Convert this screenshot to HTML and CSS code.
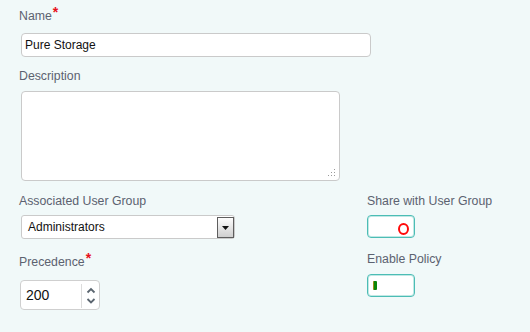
FILE: index.html
```html
<!DOCTYPE html>
<html lang="en">
<head>
  <meta charset="UTF-8" />
  <title>Policy</title>
  <link rel="stylesheet" href="styles.css">
</head>
<body>
  <div class="policy-form">
    <div class="field">
      <label class="field-label">Name<span class="req">*</span></label>
      <input class="text-input name-input" type="text" value="Pure Storage">
    </div>

    <div class="field desc-field">
      <label class="field-label">Description</label>
      <div class="desc-wrap">
        <textarea class="desc-input"></textarea>
        <svg class="grip" width="8" height="8" viewBox="0 0 8 8">
          <rect x="6" y="0" width="1" height="1" fill="#9a9a9a"/>
          <rect x="3" y="3" width="1" height="1" fill="#9a9a9a"/>
          <rect x="6" y="3" width="1" height="1" fill="#9a9a9a"/>
          <rect x="0" y="6" width="1" height="1" fill="#9a9a9a"/>
          <rect x="3" y="6" width="1" height="1" fill="#9a9a9a"/>
          <rect x="6" y="6" width="1" height="1" fill="#9a9a9a"/>
        </svg>
      </div>
    </div>

    <div class="form-row">
      <div class="col-left">
        <div class="field">
          <label class="field-label">Associated User Group</label>
          <div class="select-box">
            <span class="select-value">Administrators</span>
            <span class="select-btn">
              <svg width="7" height="4" viewBox="0 0 7 4"><path d="M0 0H7L3.5 4Z" fill="#111"/></svg>
            </span>
          </div>
        </div>
        <div class="field prec-field">
          <label class="field-label">Precedence<span class="req">*</span></label>
          <div class="number-box">
            <span class="number-value">200</span>
            <span class="spinner">
              <svg width="10" height="18" viewBox="0 0 10 18">
                <path d="M1.5 5.5L5 2L8.5 5.5" fill="none" stroke="#5b6670" stroke-width="1.8"/>
                <path d="M1.5 12L5 15.5L8.5 12" fill="none" stroke="#5b6670" stroke-width="1.8"/>
              </svg>
            </span>
          </div>
        </div>
      </div>

      <div class="col-right">
        <div class="field">
          <label class="field-label">Share with User Group</label>
          <div class="toggle toggle-off">
            <span class="knob-ring"></span>
          </div>
        </div>
        <div class="field enable-field">
          <label class="field-label">Enable Policy</label>
          <div class="toggle toggle-on">
            <span class="knob-bar"></span>
          </div>
        </div>
      </div>
    </div>
  </div>
</body>
</html>
```

FILE: styles.css
```css
html, body {
margin: 0;
padding: 0;
background: #f1f9f9;
}

body {
width: 530px;
height: 332px;
font-family: "Liberation Sans", Arial, sans-serif;
}

.policy-form {
padding: 8px 0 0 19px;
}

.field-label {
display: block;
font-size: 12.3px;
line-height: 14px;
color: #5c6270;
}

.req {
color: #e8101a;
font-size: 14px;
font-weight: bold;
position: relative;
top: -3px;
margin-left: 1px;
}

.text-input {
display: block;
box-sizing: border-box;
margin: 10px 0 0 2px;
width: 350px;
height: 24px;
padding: 0 3px;
border: 1px solid #cacaca;
border-radius: 4px;
background: #fff;
font-family: "Liberation Sans", Arial, sans-serif;
font-size: 12px;
color: #111;
outline: none;
}

.desc-field {
margin-top: 12px;
}

.desc-wrap {
position: relative;
margin: 8px 0 0 2px;
width: 319px;
height: 90px;
}

.desc-input {
display: block;
box-sizing: border-box;
width: 100%;
height: 100%;
margin: 0;
border: 1px solid #cacaca;
border-radius: 4px;
background: #fff;
resize: none;
outline: none;
}

.grip {
position: absolute;
right: 4px;
bottom: 4px;
}

.form-row {
display: grid;
grid-template-columns: 348px auto;
margin-top: 13px;
}

.select-box {
display: flex;
align-items: stretch;
box-sizing: border-box;
margin: 7px 0 0 2px;
width: 214px;
height: 24px;
padding: 1px 0 0 6px;
border: 1px solid #cacaca;
border-radius: 3px;
background: #fff;
}

.select-value {
flex: 1;
font-size: 12px;
line-height: 21px;
color: #111;
}

.select-btn {
display: flex;
align-items: center;
justify-content: center;
box-sizing: border-box;
width: 17px;
border: 1px solid #5e5e5e;
background: linear-gradient(#fdfdfd, #cfcfcf);
}

.prec-field {
margin-top: 15px;
}

.number-box {
display: flex;
box-sizing: border-box;
margin: 11px 0 0 1px;
width: 80px;
height: 30px;
border: 1px solid #cfcfcf;
border-radius: 4px;
background: #fff;
}

.number-value {
flex: 1;
padding-left: 5px;
font-size: 14px;
line-height: 28px;
color: #111;
}

.spinner {
display: flex;
align-items: center;
justify-content: center;
width: 17px;
margin: 3px 0 1px;
border-left: 1px solid #dcdcdc;
}

.toggle {
display: flex;
align-items: center;
box-sizing: border-box;
margin-top: 7px;
width: 48px;
height: 23px;
border: 1px solid #4cbdb5;
box-shadow: inset 0 0 0 1px rgba(76, 189, 181, 0.35);
border-radius: 4px;
background: #fff;
}

.toggle-off {
justify-content: flex-end;
padding: 4px 5px 0 0;
}

.knob-ring {
box-sizing: border-box;
width: 11px;
height: 12px;
border: 2.5px solid #ff0a0a;
border-radius: 50%;
}

.enable-field {
margin-top: 14px;
}

.enable-field .toggle {
margin-top: 8px;
}

.toggle-on {
padding-left: 5px;
}

.knob-bar {
width: 3px;
height: 9px;
border-left: 1px solid #9c8c1a;
border-radius: 1px;
background: #0a860a;
}
```
